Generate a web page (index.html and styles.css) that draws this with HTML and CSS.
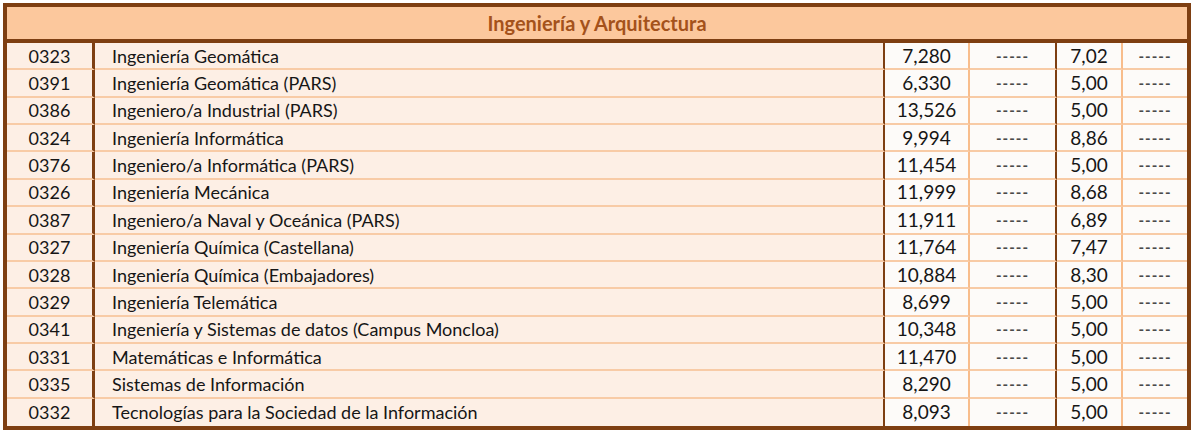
FILE: index.html
```html
<!DOCTYPE html>
<html lang="es">
<head>
<meta charset="utf-8">
<title>Ingeniería y Arquitectura</title>
<link rel="stylesheet" href="styles.css">
</head>
<body>
<table class="grades">
  <colgroup>
    <col class="c-code"><col class="c-name"><col class="c-num"><col class="c-dash"><col class="c-num2"><col class="c-dash2">
  </colgroup>
  <thead>
    <tr><th colspan="6" class="title">Ingeniería y Arquitectura</th></tr>
  </thead>
  <tbody>
    <tr><td class="code">0323</td><td class="name">Ingeniería Geomática</td><td class="num">7,280</td><td class="dash">-----</td><td class="num2">7,02</td><td class="dash2">-----</td></tr>
    <tr><td class="code">0391</td><td class="name">Ingeniería Geomática (PARS)</td><td class="num">6,330</td><td class="dash">-----</td><td class="num2">5,00</td><td class="dash2">-----</td></tr>
    <tr><td class="code">0386</td><td class="name">Ingeniero/a Industrial (PARS)</td><td class="num">13,526</td><td class="dash">-----</td><td class="num2">5,00</td><td class="dash2">-----</td></tr>
    <tr><td class="code">0324</td><td class="name">Ingeniería Informática</td><td class="num">9,994</td><td class="dash">-----</td><td class="num2">8,86</td><td class="dash2">-----</td></tr>
    <tr><td class="code">0376</td><td class="name">Ingeniero/a Informática (PARS)</td><td class="num">11,454</td><td class="dash">-----</td><td class="num2">5,00</td><td class="dash2">-----</td></tr>
    <tr><td class="code">0326</td><td class="name">Ingeniería Mecánica</td><td class="num">11,999</td><td class="dash">-----</td><td class="num2">8,68</td><td class="dash2">-----</td></tr>
    <tr><td class="code">0387</td><td class="name">Ingeniero/a Naval y Oceánica (PARS)</td><td class="num">11,911</td><td class="dash">-----</td><td class="num2">6,89</td><td class="dash2">-----</td></tr>
    <tr><td class="code">0327</td><td class="name">Ingeniería Química (Castellana)</td><td class="num">11,764</td><td class="dash">-----</td><td class="num2">7,47</td><td class="dash2">-----</td></tr>
    <tr><td class="code">0328</td><td class="name">Ingeniería Química (Embajadores)</td><td class="num">10,884</td><td class="dash">-----</td><td class="num2">8,30</td><td class="dash2">-----</td></tr>
    <tr><td class="code">0329</td><td class="name">Ingeniería Telemática</td><td class="num">8,699</td><td class="dash">-----</td><td class="num2">5,00</td><td class="dash2">-----</td></tr>
    <tr><td class="code">0341</td><td class="name">Ingeniería y Sistemas de datos (Campus Moncloa)</td><td class="num">10,348</td><td class="dash">-----</td><td class="num2">5,00</td><td class="dash2">-----</td></tr>
    <tr><td class="code">0331</td><td class="name">Matemáticas e Informática</td><td class="num">11,470</td><td class="dash">-----</td><td class="num2">5,00</td><td class="dash2">-----</td></tr>
    <tr><td class="code">0335</td><td class="name">Sistemas de Información</td><td class="num">8,290</td><td class="dash">-----</td><td class="num2">5,00</td><td class="dash2">-----</td></tr>
    <tr class="last"><td class="code">0332</td><td class="name">Tecnologías para la Sociedad de la Información</td><td class="num">8,093</td><td class="dash">-----</td><td class="num2">5,00</td><td class="dash2">-----</td></tr>
  </tbody>
</table>
</body>
</html>
```
FILE: styles.css
```css
html, body {
  margin: 0;
  padding: 0;
  background: #ffffff;
}

body {
  padding: 3px 0 0 3px;
  font-family: Lato, "Liberation Sans", sans-serif;
  color: #161616;
}

.grades {
  width: 1188px;
  table-layout: fixed;
  border-collapse: separate;
  border-spacing: 0;
  border: 4px solid #7e3f12;
  background: #fdfbf9;
}

.c-code { width: 88px; }
.c-name { width: 790px; }
.c-num { width: 85px; }
.c-dash { width: 87px; }
.c-num2 { width: 66px; }
.c-dash2 { width: 64px; }

.title {
  box-sizing: border-box;
  height: 36px;
  padding: 0;
  background: #fcc89d;
  border-bottom: 4px solid #7e3f12;
  color: #a4521b;
  font-size: 20px;
  font-weight: 700;
  text-align: center;
  vertical-align: middle;
}

.grades td {
  box-sizing: border-box;
  height: 27.36px;
  padding: 0;
  font-size: 18px;
  line-height: 22px;
  vertical-align: middle;
  border-bottom: 2px solid #f8cba6;
  white-space: nowrap;
}

.grades tr.last td {
  border-bottom: none;
}

.grades td.code {
  background: #fdefe5;
  text-align: center;
  border-right: 3px solid #7e3f12;
}

.grades td.name {
  background: #fdefe5;
  padding-left: 17px;
  border-right: 2px solid #7e3f12;
}

.grades td.num {
  text-align: center;
  font-size: 19px;
  border-right: 2px solid #f8bd8c;
}

.grades td.dash {
  text-align: center;
  color: #4a4a4a;
  font-size: 15px;
  font-weight: 700;
  letter-spacing: 1px;
  border-right: 2px solid #7e3f12;
}

.grades td.num2 {
  text-align: center;
  font-size: 19px;
  border-right: 2px solid #f8bd8c;
}

.grades td.dash2 {
  text-align: center;
  color: #4a4a4a;
  font-size: 15px;
  font-weight: 700;
  letter-spacing: 1px;
}
```
